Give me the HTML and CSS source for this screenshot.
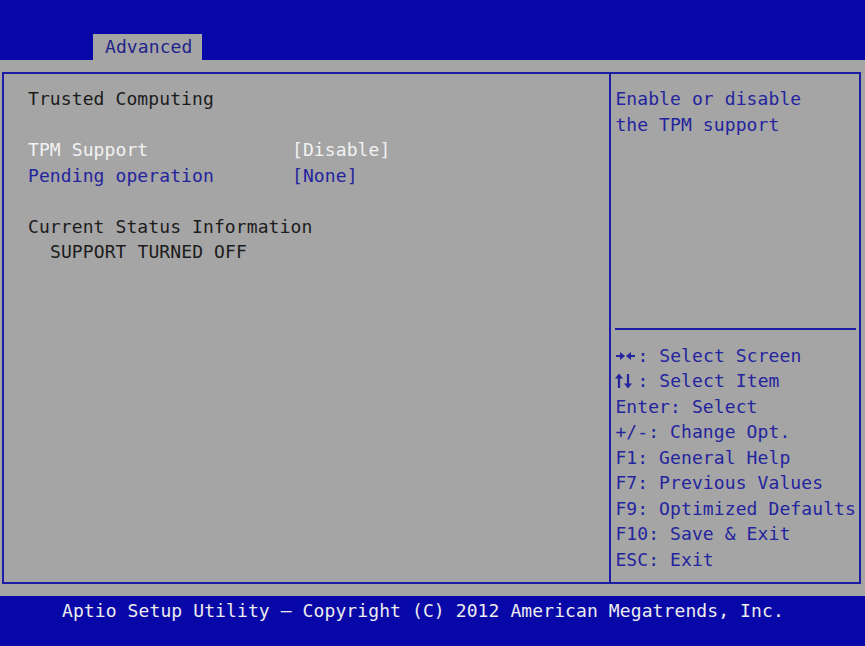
FILE: index.html
```html
<!DOCTYPE html>
<html lang="en">
<head>
  <meta charset="UTF-8" />
  <title>Aptio Setup Utility - Advanced</title>
  <link rel="stylesheet" href="styles.css">
</head>
<body>
  <div class="screen">
    <div class="top-bar">
      <div class="tab">Advanced</div>
    </div>

    <div class="work">
      <div class="frame">
        <div class="settings">
          <div class="row title">Trusted Computing</div>
          <div class="row blank"></div>
          <div class="row active"><span class="label">TPM Support</span><span class="value">[Disable]</span></div>
          <div class="row option"><span class="label">Pending operation</span><span class="value">[None]</span></div>
          <div class="row blank"></div>
          <div class="row title">Current Status Information</div>
          <div class="row title indent">SUPPORT TURNED OFF</div>
        </div>

        <div class="help">
          <div class="help-text">
            <div class="row">Enable or disable</div>
            <div class="row">the TPM support</div>
          </div>
          <div class="keys">
            <div class="row"><svg class="arrows" viewBox="0 0 22 16" width="22" height="16">
                <path d="M1 8H6M15 8H20" stroke="currentColor" stroke-width="2.2" />
                <polygon points="5,4 10,8 5,12" fill="currentColor" />
                <polygon points="16,4 11,8 16,12" fill="currentColor" />
              </svg>: Select Screen</div>
            <div class="row"><svg class="arrows" viewBox="0 0 22 16" width="22" height="16">
                <path d="M4 4V15M13 1V12" stroke="currentColor" stroke-width="2.2" />
                <polygon points="0,5.5 4,0.5 8,5.5" fill="currentColor" />
                <polygon points="9,10.5 13,15.5 17,10.5" fill="currentColor" />
              </svg>: Select Item</div>
            <div class="row">Enter: Select</div>
            <div class="row">+/-: Change Opt.</div>
            <div class="row">F1: General Help</div>
            <div class="row">F7: Previous Values</div>
            <div class="row">F9: Optimized Defaults</div>
            <div class="row">F10: Save &amp; Exit</div>
            <div class="row">ESC: Exit</div>
          </div>
        </div>
      </div>
    </div>

    <div class="bottom-bar">Aptio Setup Utility &ndash; Copyright (C) 2012 American Megatrends, Inc.</div>
  </div>
</body>
</html>
```

FILE: styles.css
```css
body {
  margin: 0;
  background: #a5a5a5;
  font-family: "DejaVu Sans Mono", "Liberation Mono", monospace;
  font-size: 18px;
  letter-spacing: 0.1px;
  color: #1c1c1c;
}
.screen {
  width: 865px;
  height: 646px;
  display: flex;
  flex-direction: column;
  overflow: hidden;
}
.row {
  height: 25.5px;
  line-height: 25.5px;
  white-space: nowrap;
}

/* top menu bar */
.top-bar {
  height: 60px;
  background: #0808a8;
  display: flex;
  align-items: flex-end;
  padding-left: 93px;
  box-sizing: border-box;
}
.tab {
  width: 109px;
  height: 26px;
  line-height: 26px;
  background: #a5a5a5;
  color: #22228a;
  padding-left: 12px;
  box-sizing: border-box;
}

/* grey work area with blue frame */
.work {
  height: 536px;
  padding: 12px 4px 12px 2px;
  box-sizing: border-box;
}
.frame {
  height: 100%;
  border: 2px solid #1c1ca4;
  box-sizing: border-box;
  display: flex;
}
.settings {
  width: 608px;
  padding: 12px 0 0 24px;
  box-sizing: border-box;
  border-right: 2px solid #1c1ca4;
}
.settings .label {
  display: inline-block;
  width: 264px;
}
.settings .indent {
  padding-left: 22px;
}
.active {
  color: #f2f2f2;
}
.option {
  color: #24249e;
}

.help {
  flex: 1;
  display: flex;
  flex-direction: column;
  color: #24249e;
}
.help-text {
  flex: 1;
  padding: 12px 0 0 4px;
}
.keys {
  margin: 0 3px 0 4px;
  border-top: 2px solid #1c1ca4;
  padding: 13px 0 10px;
}
.arrows {
  vertical-align: -2px;
}

/* status bar */
.bottom-bar {
  flex: 1;
  background: #0808a8;
  color: #ececec;
  padding: 2px 0 0 62px;
  line-height: 25.5px;
  white-space: pre;
}
```
